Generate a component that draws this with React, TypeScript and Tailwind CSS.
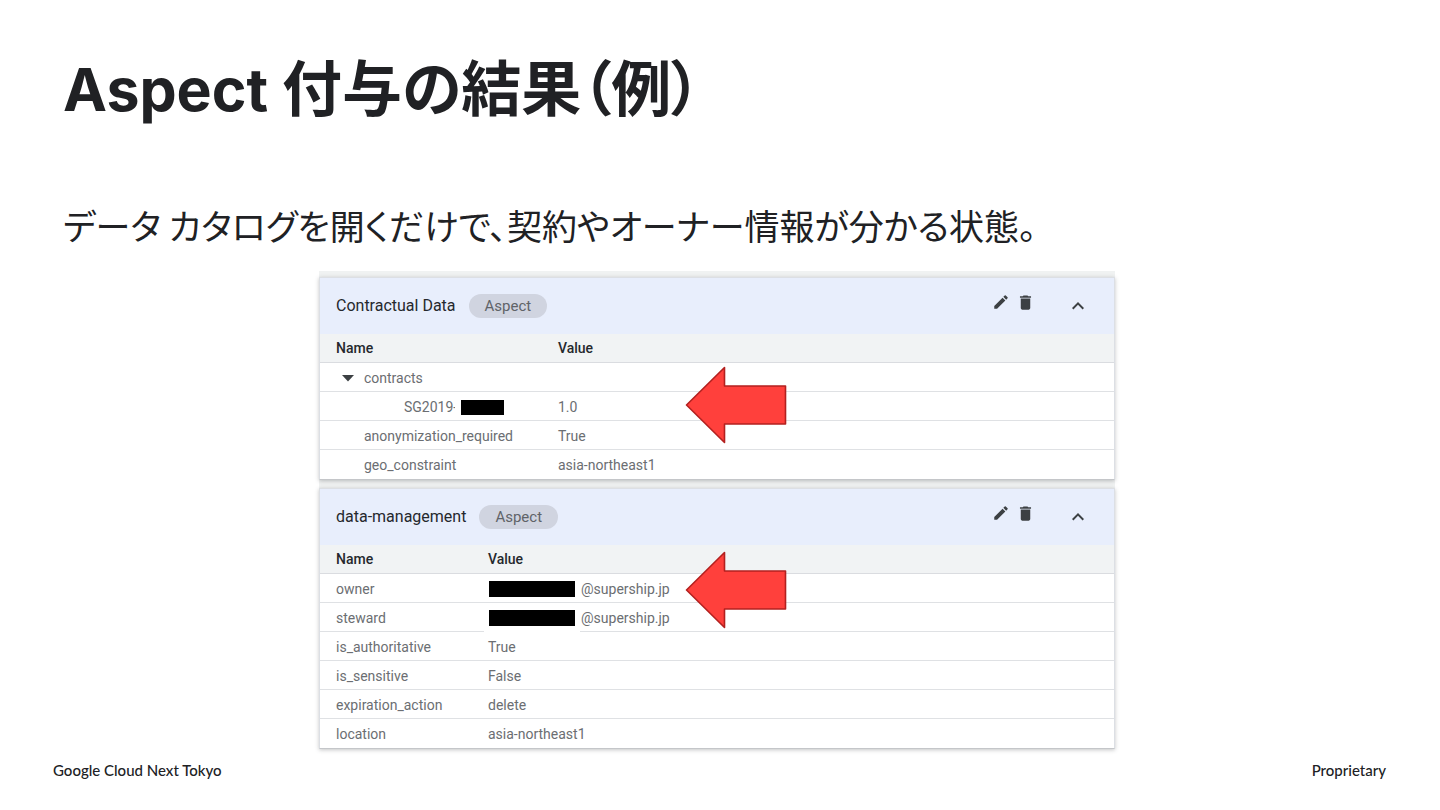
import { useState } from 'react';
import type { ReactNode } from 'react';
import { MdDelete, MdEdit, MdExpandLess, MdExpandMore } from 'react-icons/md';

type Row = {
  id: string;
  name: ReactNode;
  value?: ReactNode;
};

const Masked = ({ suffix, patch }: { suffix: string; patch?: boolean }) => (
  <span className="flex items-center">
    {/* white patch hides the divider under the mask */}
    {patch && <span className="absolute -left-1 -bottom-px w-24 h-1 bg-white" />}
    <span className="ml-px mr-[6px] w-[86px] h-4 bg-black" />
    {suffix}
  </span>
);

const management: Row[] = [
  { id: 'owner', name: 'owner', value: <Masked suffix="@supership.jp" /> },
  { id: 'steward', name: 'steward', value: <Masked suffix="@supership.jp" patch /> },
  { id: 'authoritative', name: 'is_authoritative', value: 'True' },
  { id: 'sensitive', name: 'is_sensitive', value: 'False' },
  { id: 'expiration', name: 'expiration_action', value: 'delete' },
  { id: 'location', name: 'location', value: 'asia-northeast1' },
];

function Arrow({ className }: { className: string }) {
  return (
    <svg className={`absolute pointer-events-none ${className}`} width="102" height="78" viewBox="0 0 102 78" aria-hidden="true">
      <path
        d="M1.5 39 L39.5 1.5 V20 H100.5 V58 H39.5 V76.5 Z"
        fill="#ff403c"
        stroke="#b3201f"
        strokeWidth="1.6"
        strokeLinejoin="round"
      />
    </svg>
  );
}

type CardProps = {
  title: string;
  rows: Row[];
  nameWidth: string;
  arrow: string;
};

function AspectCard({ title, rows, nameWidth, arrow }: CardProps) {
  const [open, setOpen] = useState(true);
  const Chevron = open ? MdExpandLess : MdExpandMore;

  return (
    <section className="relative bg-white border border-[#dcdfe4] border-b-[#c4c6c9] shadow-[0_1px_4px_rgba(60,64,67,0.3)]">
      <header className="flex items-center h-14 pl-4 pr-6 bg-[#e8eefc]">
        <h2 className="text-base text-[#25282d]">{title}</h2>
        <span className="ml-[13px] h-6 px-4 rounded-full bg-[#d0d4e0] text-[15px] leading-6 text-[#5f6368]">Aspect</span>
        <div className="ml-auto pb-2 flex gap-[6px] text-[#3c4043]">
          <button type="button" aria-label={`Edit ${title}`}><MdEdit size={18} /></button>
          <button type="button" aria-label={`Delete ${title}`}><MdDelete size={19} /></button>
        </div>
        <button
          type="button"
          className="ml-[31px] text-[#3c4043]"
          aria-label={`Toggle ${title}`}
          aria-expanded={open}
          onClick={() => setOpen(!open)}
        >
          <Chevron size={24} />
        </button>
      </header>

      {open && (
        <table className="w-full table-fixed border-separate border-spacing-0 text-left text-sm leading-5 text-[#6b6e72]">
          <thead className="bg-[#f1f3f4] text-[#25282d]">
            <tr>
              <th className={`h-[29px] pl-4 font-medium border-b border-[#dadce0] ${nameWidth}`}>Name</th>
              <th className="h-[29px] font-medium border-b border-[#dadce0]">Value</th>
            </tr>
          </thead>
          <tbody className="[&>tr:last-child>td]:border-white">
            {rows.map(row => (
              <tr key={row.id}>
                <td className="h-[29px] pt-[2px] pl-4 border-b border-[#dfe1e4]">{row.name}</td>
                <td className="relative h-[29px] pt-[2px] border-b border-[#dfe1e4]">{row.value}</td>
              </tr>
            ))}
          </tbody>
        </table>
      )}
      <Arrow className={arrow} />
    </section>
  );
}

export default function App() {
  const [expanded, setExpanded] = useState(true);

  const contracts: Row = {
    id: 'contracts',
    name: (
      <button type="button" className="flex items-center" aria-expanded={expanded} onClick={() => setExpanded(!expanded)}>
        <svg className="ml-[6px] mr-[10px]" width="12" height="7" viewBox="0 0 12 7" aria-hidden="true">
          <path d="M0 0 H12 L6 6.5 Z" fill="#3c4043" />
        </svg>
        contracts
      </button>
    ),
  };
  const contractId: Row = {
    id: 'contract-id',
    name: (
      <span className="flex items-center pl-[68px]">
        SG2019-
        <span className="-ml-[2px] mt-px w-[49px] h-[15px] border-l-[6px] border-white bg-black" />
      </span>
    ),
    value: '1.0',
  };
  const contractual: Row[] = [
    contracts,
    ...(expanded ? [contractId] : []),
    { id: 'anonymization', name: <span className="pl-7">anonymization_required</span>, value: 'True' },
    { id: 'geo', name: <span className="pl-7">geo_constraint</span>, value: 'asia-northeast1' },
  ];

  return (
    <div className="flex flex-col min-h-screen bg-white text-[#202124] font-['Roboto','Noto_Sans_CJK_JP',sans-serif]">
      <div className="px-[63px] pt-[45px] font-['Noto_Sans_CJK_JP',sans-serif] [font-feature-settings:'palt']">
        <h1 className="text-[60px] leading-[80px] font-bold">
          <span className="font-['Inter',sans-serif] text-[59px] leading-[60px]">Aspect </span>付与の結果（例）
        </h1>
        <p className="mt-[74px] text-[35px] leading-[52px]">データ カタログを開くだけで、契約やオーナー情報が分かる状態。</p>
      </div>

      <main className="w-full max-w-[802px] mx-auto mt-5 pr-[6px]">
        <div className="flex flex-col gap-2 pt-[6px] bg-[#f0f2f2]">
          <AspectCard title="Contractual Data" rows={contractual} nameWidth="w-[238px]" arrow="left-[365px] top-[88px]" />
          <AspectCard title="data-management" rows={management} nameWidth="w-[168px]" arrow="left-[365px] top-[62px]" />
        </div>
      </main>

      <footer className="mt-auto flex justify-between pl-[53px] pr-[54px] pb-[30px] font-['Lato',sans-serif] text-[15px] leading-5 font-medium">
        <span>Google Cloud Next Tokyo</span>
        <span>Proprietary</span>
      </footer>
    </div>
  );
}
